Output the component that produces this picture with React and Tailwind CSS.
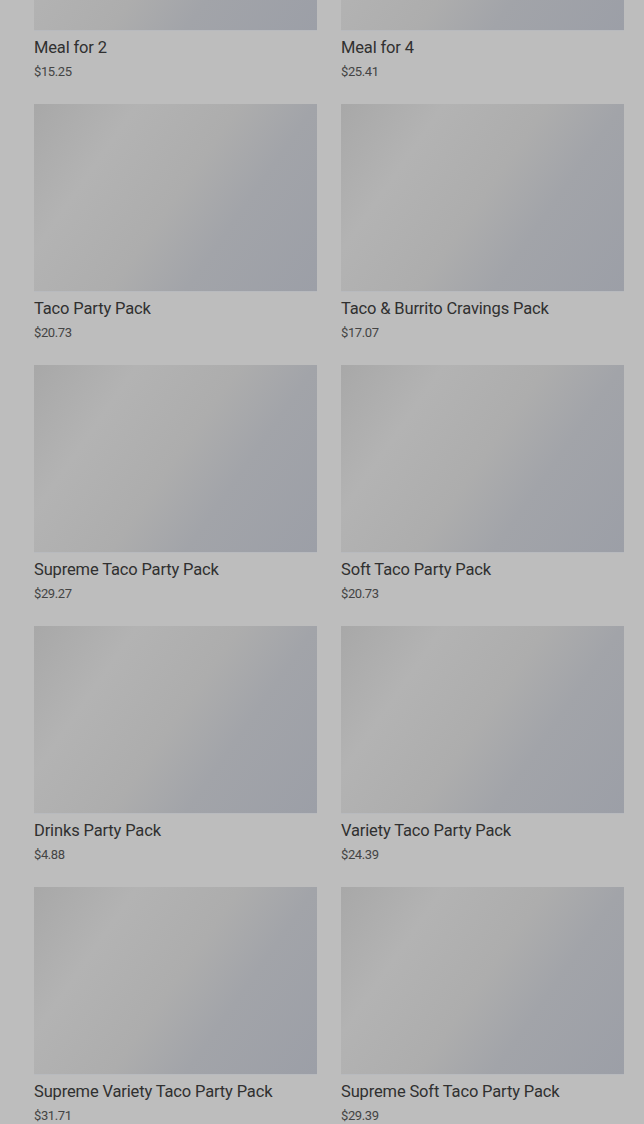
const items = [
  { name: 'Meal for 2', price: '$15.25' },
  { name: 'Meal for 4', price: '$25.41' },
  { name: 'Taco Party Pack', price: '$20.73' },
  { name: 'Taco & Burrito Cravings Pack', price: '$17.07' },
  { name: 'Supreme Taco Party Pack', price: '$29.27' },
  { name: 'Soft Taco Party Pack', price: '$20.73' },
  { name: 'Drinks Party Pack', price: '$4.88' },
  { name: 'Variety Taco Party Pack', price: '$24.39' },
  { name: 'Supreme Variety Taco Party Pack', price: '$31.71' },
  { name: 'Supreme Soft Taco Party Pack', price: '$29.39' },
];

function Card({ name, price }) {
  return (
    <div className="flex flex-col">
      {/* placeholder image */}
      <div className="h-[188px] w-full border-b border-[#b8babe] bg-[linear-gradient(125deg,#a8a8a8_0%,#b3b3b3_25%,#adadad_50%,#a2a4a9_68%,#9c9fa7_100%)]" />
      <div className="mt-[5px] text-[16.5px] leading-6 font-normal text-[#303030] tracking-[-0.15px]">{name}</div>
      <div className="text-[13px] leading-6 text-[#444444] tracking-[-0.4px]">{price}</div>
    </div>
  );
}

export default function App() {
  return (
    <div className="h-[1124px] w-full overflow-hidden bg-[#bdbdbd] font-['Roboto','Liberation_Sans',sans-serif]">
      <div className="-mt-[157px] grid grid-cols-2 gap-x-6 gap-y-5 pl-[34px] pr-5">
        {items.map((it) => (
          <Card key={it.name} {...it} />
        ))}
      </div>
    </div>
  );
}
